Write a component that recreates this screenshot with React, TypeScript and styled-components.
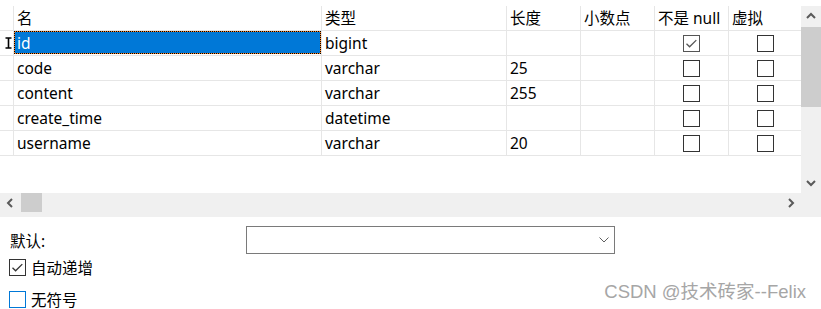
import React from "react";
import styled, { createGlobalStyle } from "styled-components";

const Global = createGlobalStyle`
  html, body { margin: 0; padding: 0; background: #fff; }
  body { font-family: "Noto Sans", "Noto Sans CJK SC", sans-serif; }
`;

const Page = styled.div`
  position: relative;
  width: 821px;
  height: 309px;
  overflow: hidden;
  background: #fff;
  color: #000;
  font-size: 15.5px;
  font-family: "Noto Sans", "Noto Sans CJK SC", sans-serif;
`;

const GridFrame = styled.div`
  padding-top: 6px;
  display: flex;
  flex-direction: column;
`;

const GridTop = styled.div`
  display: flex;
  height: 187px;
`;

const Viewport = styled.div`
  width: 801px;
  background: #fff;
`;

const Table = styled.div`
  display: grid;
  grid-template-columns: 14px 308px 185px 74px 74px 74px 72px;
  grid-auto-rows: 25px;
`;

const Cell = styled.div<{ $center?: boolean; $last?: boolean }>`
  position: relative;
  box-sizing: border-box;
  border-bottom: 1px solid #e6e6e6;
  border-right: ${(p) => (p.$last ? "none" : "1px solid #e6e6e6")};
  padding-left: ${(p) => (p.$center ? "0" : "3px")};
  line-height: 24px;
  white-space: nowrap;
  overflow: hidden;
  display: flex;
  align-items: center;
  justify-content: ${(p) => (p.$center ? "center" : "flex-start")};
`;

const HeaderCell = styled(Cell)``;

const Selection = styled.div`
  position: absolute;
  inset: 0 0 1px 0;
  background: #0078d7;
  box-shadow: inset 0 0 0 1px #ff8728;
  &::after {
    content: "";
    position: absolute;
    inset: 0;
    border: 1px dotted #000;
  }
`;

const CellText = styled.span<{ $light?: boolean }>`
  position: relative;
  color: ${(p) => (p.$light ? "#fff" : "#000")};
`;

const RowMarker = styled.div`
  box-sizing: border-box;
  border-bottom: 1px solid #e6e6e6;
  border-right: 1px solid #e6e6e6;
  display: flex;
  align-items: flex-start;
  padding: 6px 0 0 5px;
`;

const Box = styled.span<{ $focus?: boolean; $dim?: boolean }>`
  box-sizing: border-box;
  width: 17px;
  height: 17px;
  flex: 0 0 17px;
  border: 1px solid
    ${(p) => (p.$focus ? "#0078d7" : p.$dim ? "#555" : "#333")};
  background: #fff;
  display: inline-flex;
  align-items: center;
  justify-content: center;
`;

const VScroll = styled.div`
  width: 20px;
  background: #f0f0f0;
  display: flex;
  flex-direction: column;
`;

const ArrowBtn = styled.div<{ $h?: number }>`
  width: 20px;
  height: ${(p) => p.$h ?? 20}px;
  display: flex;
  align-items: center;
  justify-content: center;
  flex: none;
`;

const VThumb = styled.div`
  margin-top: 1px;
  height: 80px;
  background: #cdcdcd;
`;

const Spacer = styled.div`
  flex: 1;
`;

const HScroll = styled.div`
  height: 24px;
  background: #f0f0f0;
  display: flex;
  align-items: flex-start;
`;

const HTrack = styled.div`
  width: 801px;
  height: 19px;
  display: flex;
  align-items: stretch;
`;

const HThumb = styled.div`
  width: 21px;
  margin-left: 1px;
  background: #cdcdcd;
`;

const Form = styled.div`
  padding: 9px 0 0 9px;
  display: flex;
  flex-direction: column;
`;

const FieldRow = styled.div`
  display: flex;
  align-items: center;
  height: 28px;
`;

const FieldLabel = styled.span`
  width: 237px;
  padding-left: 1px;
  box-sizing: border-box;
`;

const Select = styled.div`
  box-sizing: border-box;
  width: 369px;
  height: 28px;
  border: 1px solid #7a7a7a;
  display: flex;
  align-items: center;
  justify-content: flex-end;
  padding-right: 5px;
`;

const CheckRow = styled.div<{ $gap: number }>`
  display: flex;
  align-items: center;
  gap: 5px;
  height: 17px;
  line-height: 16px;
  margin-top: ${(p) => p.$gap}px;
`;

const Watermark = styled.div`
  position: absolute;
  right: 15px;
  top: 277px;
  font-family: "Liberation Sans", "Noto Sans CJK SC", sans-serif;
  font-size: 18.5px;
  color: #a6a6a6;
  text-shadow: 0 0 1px #fff;
`;

const Check = ({ color }: { color: string }) => (
  <svg width="13" height="13" viewBox="0 0 13 13">
    <path d="M1.5 6.8 L4.6 9.8 L11.3 3.1" fill="none" stroke={color} strokeWidth="1.3" />
  </svg>
);

const CheckBox = ({ checked, focus, dim }: { checked?: boolean; focus?: boolean; dim?: boolean }) => (
  <Box $focus={focus} $dim={dim}>
    {checked && <Check color={dim ? "#555" : "#333"} />}
  </Box>
);

const Chevron = ({ dir, color = "#5a5a5a" }: { dir: "up" | "down" | "left" | "right"; color?: string }) => {
  const rot = { up: 0, right: 90, down: 180, left: 270 }[dir];
  return (
    <svg width="10" height="10" viewBox="0 0 10 10" style={{ transform: `rotate(${rot}deg)` }}>
      <path d="M1 7 L5 3 L9 7" fill="none" stroke={color} strokeWidth="2" />
    </svg>
  );
};

const IBeam = () => (
  <svg width="7" height="12" viewBox="0 0 7 12">
    <path d="M0.5 1 H6.5 M0.5 11 H6.5 M3.5 1 V11" fill="none" stroke="#000" strokeWidth="1.6" />
  </svg>
);

type Row = { name: string; type: string; len: string; dec: string; notNull: boolean; virt: boolean };

const rows: Row[] = [
  { name: "id", type: "bigint", len: "", dec: "", notNull: true, virt: false },
  { name: "code", type: "varchar", len: "25", dec: "", notNull: false, virt: false },
  { name: "content", type: "varchar", len: "255", dec: "", notNull: false, virt: false },
  { name: "create_time", type: "datetime", len: "", dec: "", notNull: false, virt: false },
  { name: "username", type: "varchar", len: "20", dec: "", notNull: false, virt: false },
];

const headers = ["名", "类型", "长度", "小数点", "不是 null", "虚拟"];

export default function App() {
  return (
    <Page>
      <Global />
      <GridFrame>
        <GridTop>
          <Viewport>
            <Table>
              <HeaderCell />
              {headers.map((h, i) => (
                <HeaderCell key={h} $last={i === headers.length - 1}>
                  <CellText>{h}</CellText>
                </HeaderCell>
              ))}
              {rows.map((r, i) => (
                <React.Fragment key={r.name}>
                  <RowMarker>{i === 0 && <IBeam />}</RowMarker>
                  <Cell>
                    {i === 0 && <Selection />}
                    <CellText $light={i === 0}>{r.name}</CellText>
                  </Cell>
                  <Cell>
                    <CellText>{r.type}</CellText>
                  </Cell>
                  <Cell>
                    <CellText>{r.len}</CellText>
                  </Cell>
                  <Cell>
                    <CellText>{r.dec}</CellText>
                  </Cell>
                  <Cell $center>
                    <CheckBox checked={r.notNull} dim={r.notNull} />
                  </Cell>
                  <Cell $center $last>
                    <CheckBox checked={r.virt} />
                  </Cell>
                </React.Fragment>
              ))}
            </Table>
          </Viewport>
          <VScroll>
            <ArrowBtn>
              <Chevron dir="up" />
            </ArrowBtn>
            <VThumb />
            <Spacer />
            <ArrowBtn>
              <Chevron dir="down" />
            </ArrowBtn>
          </VScroll>
        </GridTop>
        <HScroll>
          <HTrack>
            <ArrowBtn $h={19}>
              <Chevron dir="left" />
            </ArrowBtn>
            <HThumb />
            <Spacer />
            <ArrowBtn $h={19}>
              <Chevron dir="right" />
            </ArrowBtn>
          </HTrack>
        </HScroll>
      </GridFrame>
      <Form>
        <FieldRow>
          <FieldLabel>默认:</FieldLabel>
          <Select>
            <svg width="10" height="6" viewBox="0 0 10 6">
              <path d="M0.5 0.5 L5 5 L9.5 0.5" fill="none" stroke="#606060" strokeWidth="1" />
            </svg>
          </Select>
        </FieldRow>
        <CheckRow $gap={5}>
          <CheckBox checked />
          <span>自动递增</span>
        </CheckRow>
        <CheckRow $gap={15}>
          <CheckBox focus />
          <span>无符号</span>
        </CheckRow>
      </Form>
      <Watermark>CSDN @技术砖家--Felix</Watermark>
    </Page>
  );
}
